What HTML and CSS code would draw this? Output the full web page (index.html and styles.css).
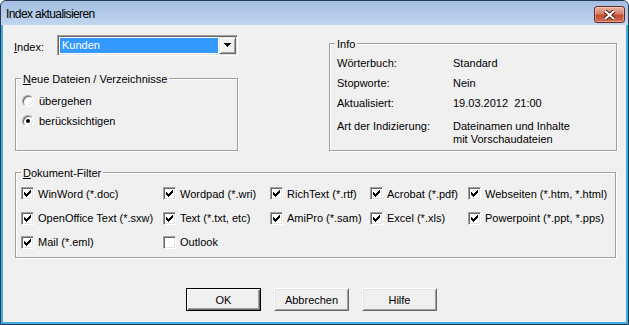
FILE: index.html
```html
<!DOCTYPE html>
<html lang="de">
<head>
  <meta charset="UTF-8">
  <title>Index aktualisieren</title>
  <link rel="stylesheet" href="styles.css">
</head>
<body>
  <div class="window">
    <div class="titlebar">
      <span class="title">Index aktualisieren</span>
      <span class="close">
        <svg width="13" height="10" viewBox="0 0 13 10">
          <path d="M2 1l9 8M11 1l-9 8" stroke="#4a1d16" stroke-width="4"/>
          <path d="M2 1l9 8M11 1l-9 8" stroke="#fff" stroke-width="2"/>
        </svg>
      </span>
    </div>

    <div class="client">
      <div class="top">
        <div class="left">
          <div class="index-row">
            <span class="index-label"><u>I</u>ndex:</span>
            <div class="combo">
              <span class="combo-value">Kunden</span>
              <span class="combo-btn">
                <svg width="7" height="4" viewBox="0 0 7 4" shape-rendering="crispEdges"><path d="M0 0h7v1h-1v1h-1v1h-1v1h-1v-1h-1v-1h-1v-1h-1z"/></svg>
              </span>
            </div>
          </div>

          <div class="group neue">
            <span class="group-title"><u>N</u>eue Dateien / Verzeichnisse</span>
            <div class="radio-row"><span class="radio"></span>übergehen</div>
            <div class="radio-row"><span class="radio checked"></span>berücksichtigen</div>
          </div>
        </div>

        <div class="group info">
          <span class="group-title">Info</span>
          <div class="info-row"><span class="info-label">Wörterbuch:</span><span>Standard</span></div>
          <div class="info-row"><span class="info-label">Stopworte:</span><span>Nein</span></div>
          <div class="info-row"><span class="info-label">Aktualisiert:</span><span>19.03.2012&nbsp; 21:00</span></div>
          <div class="info-row multi"><span class="info-label">Art der Indizierung:</span><span>Dateinamen und Inhalte<br>mit Vorschaudateien</span></div>
        </div>
      </div>

      <div class="group filter">
        <span class="group-title"><u>D</u>okument-Filter</span>
        <div class="filter-grid">
          <label class="check-item"><span class="check"><svg viewBox="0 0 7 7" shape-rendering="crispEdges"><path d="M0 2h1v1h1v1h1v-1h1v-1h1v-1h1v-1h1v3h-1v1h-1v1h-1v1h-1v1h-1v-1h-1v-1h-1z"/></svg></span>WinWord (*.doc)</label>
          <label class="check-item"><span class="check"><svg viewBox="0 0 7 7" shape-rendering="crispEdges"><path d="M0 2h1v1h1v1h1v-1h1v-1h1v-1h1v-1h1v3h-1v1h-1v1h-1v1h-1v1h-1v-1h-1v-1h-1z"/></svg></span>Wordpad (*.wri)</label>
          <label class="check-item"><span class="check"><svg viewBox="0 0 7 7" shape-rendering="crispEdges"><path d="M0 2h1v1h1v1h1v-1h1v-1h1v-1h1v-1h1v3h-1v1h-1v1h-1v1h-1v1h-1v-1h-1v-1h-1z"/></svg></span>RichText (*.rtf)</label>
          <label class="check-item"><span class="check"><svg viewBox="0 0 7 7" shape-rendering="crispEdges"><path d="M0 2h1v1h1v1h1v-1h1v-1h1v-1h1v-1h1v3h-1v1h-1v1h-1v1h-1v1h-1v-1h-1v-1h-1z"/></svg></span>Acrobat (*.pdf)</label>
          <label class="check-item"><span class="check"><svg viewBox="0 0 7 7" shape-rendering="crispEdges"><path d="M0 2h1v1h1v1h1v-1h1v-1h1v-1h1v-1h1v3h-1v1h-1v1h-1v1h-1v1h-1v-1h-1v-1h-1z"/></svg></span>Webseiten (*.htm, *.html)</label>

          <label class="check-item"><span class="check"><svg viewBox="0 0 7 7" shape-rendering="crispEdges"><path d="M0 2h1v1h1v1h1v-1h1v-1h1v-1h1v-1h1v3h-1v1h-1v1h-1v1h-1v1h-1v-1h-1v-1h-1z"/></svg></span>OpenOffice Text (*.sxw)</label>
          <label class="check-item"><span class="check"><svg viewBox="0 0 7 7" shape-rendering="crispEdges"><path d="M0 2h1v1h1v1h1v-1h1v-1h1v-1h1v-1h1v3h-1v1h-1v1h-1v1h-1v1h-1v-1h-1v-1h-1z"/></svg></span>Text (*.txt, etc)</label>
          <label class="check-item"><span class="check"><svg viewBox="0 0 7 7" shape-rendering="crispEdges"><path d="M0 2h1v1h1v1h1v-1h1v-1h1v-1h1v-1h1v3h-1v1h-1v1h-1v1h-1v1h-1v-1h-1v-1h-1z"/></svg></span>AmiPro (*.sam)</label>
          <label class="check-item"><span class="check"><svg viewBox="0 0 7 7" shape-rendering="crispEdges"><path d="M0 2h1v1h1v1h1v-1h1v-1h1v-1h1v-1h1v3h-1v1h-1v1h-1v1h-1v1h-1v-1h-1v-1h-1z"/></svg></span>Excel (*.xls)</label>
          <label class="check-item"><span class="check"><svg viewBox="0 0 7 7" shape-rendering="crispEdges"><path d="M0 2h1v1h1v1h1v-1h1v-1h1v-1h1v-1h1v3h-1v1h-1v1h-1v1h-1v1h-1v-1h-1v-1h-1z"/></svg></span>Powerpoint (*.ppt, *.pps)</label>

          <label class="check-item"><span class="check"><svg viewBox="0 0 7 7" shape-rendering="crispEdges"><path d="M0 2h1v1h1v1h1v-1h1v-1h1v-1h1v-1h1v3h-1v1h-1v1h-1v1h-1v1h-1v-1h-1v-1h-1z"/></svg></span>Mail (*.eml)</label>
          <label class="check-item"><span class="check"></span>Outlook</label>
        </div>
      </div>

      <div class="buttons">
        <button class="btn default">OK</button>
        <button class="btn">Abbrechen</button>
        <button class="btn">Hilfe</button>
      </div>
    </div>
  </div>
</body>
</html>
```

FILE: styles.css
```css
body {
  margin: 0;
  font-family: "Liberation Sans", Arial, sans-serif;
  font-size: 11px;
  color: #000;
}
.window {
  box-sizing: border-box;
  width: 629px;
  height: 325px;
  border: 1px solid #26384d;
  border-radius: 6px 6px 0 0;
  background: #3eaee0;
  padding: 0 2px 2px;
  display: flex;
  flex-direction: column;
  overflow: hidden;
}
.titlebar {
  height: 24px;
  flex: none;
  margin: 0 -2px;
  padding: 0 3px 0 5px;
  background: linear-gradient(#a3bee1, #c1d6ef);
  display: flex;
  justify-content: space-between;
}
.title {
  font-size: 12px;
  letter-spacing: -0.6px;
  line-height: 24px;
  padding-top: 1px;
}
.close {
  box-sizing: border-box;
  width: 31px;
  height: 17px;
  margin-top: 5px;
  border: 1px solid #6b2a20;
  border-radius: 3px;
  background: linear-gradient(#eab0a3, #d9806a 45%, #c24a30 55%, #d06f55);
  box-shadow: inset 0 0 0 1px rgba(255,255,255,0.35);
  display: flex;
  align-items: center;
  justify-content: center;
}
.client {
  flex: 1;
  background: #f0f0f0;
  padding: 10px 0 0 11px;
}
.top {
  display: flex;
}
.left {
  width: 224px;
}
.index-row {
  display: flex;
  align-items: center;
  height: 21px;
}
.index-label {
  width: 43px;
  padding-top: 2px;
}
.combo {
  box-sizing: border-box;
  width: 181px;
  height: 21px;
  padding: 1px;
  display: flex;
  background: #fff;
  border: 1px solid;
  border-color: #a0a0a0 #fff #fff #a0a0a0;
  box-shadow: inset 1px 1px #696969, inset -1px -1px #e3e3e3;
}
.combo-value {
  flex: 1;
  margin: 1px;
  padding-left: 2px;
  background: #3399ff;
  color: #fff;
  line-height: 15px;
}
.combo-btn {
  box-sizing: border-box;
  width: 17px;
  background: #f0f0f0;
  border: 1px solid;
  border-color: #e3e3e3 #696969 #696969 #e3e3e3;
  box-shadow: inset 1px 1px #fff, inset -1px -1px #a0a0a0;
  display: flex;
  align-items: center;
  justify-content: center;
  padding-bottom: 1px;
}
.group {
  position: relative;
  box-sizing: border-box;
  border: 1px solid #a0a0a0;
  box-shadow: 1px 1px #fff, inset 1px 1px #fff;
}
.group-title {
  position: absolute;
  top: -6px;
  left: 5px;
  padding: 0 2px;
  line-height: 13px;
  background: #f0f0f0;
  white-space: nowrap;
}
.neue {
  width: 223px;
  height: 73px;
  margin: 22px 0 0 1px;
  padding: 12px 0 0 6px;
}
.radio-row {
  display: flex;
  align-items: center;
  gap: 5px;
  height: 20px;
}
.radio {
  box-sizing: border-box;
  width: 12px;
  height: 12px;
  border-radius: 50%;
  background: #fff;
  border: 1px solid;
  border-color: #a0a0a0 #fff #fff #a0a0a0;
  box-shadow: inset 1px 1px #696969, inset -1px -1px #e3e3e3;
  display: flex;
  align-items: center;
  justify-content: center;
}
.radio.checked::after {
  content: "";
  width: 4px;
  height: 4px;
  border-radius: 50%;
  background: #000;
}
.info {
  width: 288px;
  height: 108px;
  margin: 8px 0 0 91px;
  padding: 9px 0 0 7px;
}
.info-row {
  display: flex;
  height: 20px;
  line-height: 20px;
}
.info-row.multi {
  height: auto;
  margin-top: 7px;
  line-height: 13px;
}
.info-label {
  width: 116px;
}
.filter {
  width: 601px;
  height: 86px;
  margin: 21px 0 0 1px;
  padding: 8px 0 0 5px;
}
.filter-grid {
  display: grid;
  grid-template-columns: 142px 107px 100px 98px auto;
  grid-template-rows: 25px 24px 24px;
}
.check-item {
  display: flex;
  align-items: center;
  gap: 4px;
  white-space: nowrap;
}
.check {
  box-sizing: border-box;
  width: 13px;
  height: 13px;
  background: #fff;
  border: 1px solid;
  border-color: #a0a0a0 #fff #fff #a0a0a0;
  box-shadow: inset 1px 1px #696969, inset -1px -1px #e3e3e3;
  display: flex;
  align-items: center;
  justify-content: center;
}
.check svg {
  width: 7px;
  height: 7px;
}
.buttons {
  display: flex;
  gap: 13px;
  margin: 30px 0 0 172px;
}
.btn {
  box-sizing: border-box;
  width: 75px;
  height: 23px;
  padding: 0;
  font-family: inherit;
  font-size: 11px;
  color: #000;
  background: #f0f0f0;
  border: 1px solid;
  border-color: #fff #696969 #696969 #fff;
  box-shadow: inset 1px 1px #e3e3e3, inset -1px -1px #a0a0a0;
}
.btn.default {
  border-color: #000;
  box-shadow: inset 1px 1px #fff, inset -1px -1px #696969, inset -2px -2px #a0a0a0;
}
```
